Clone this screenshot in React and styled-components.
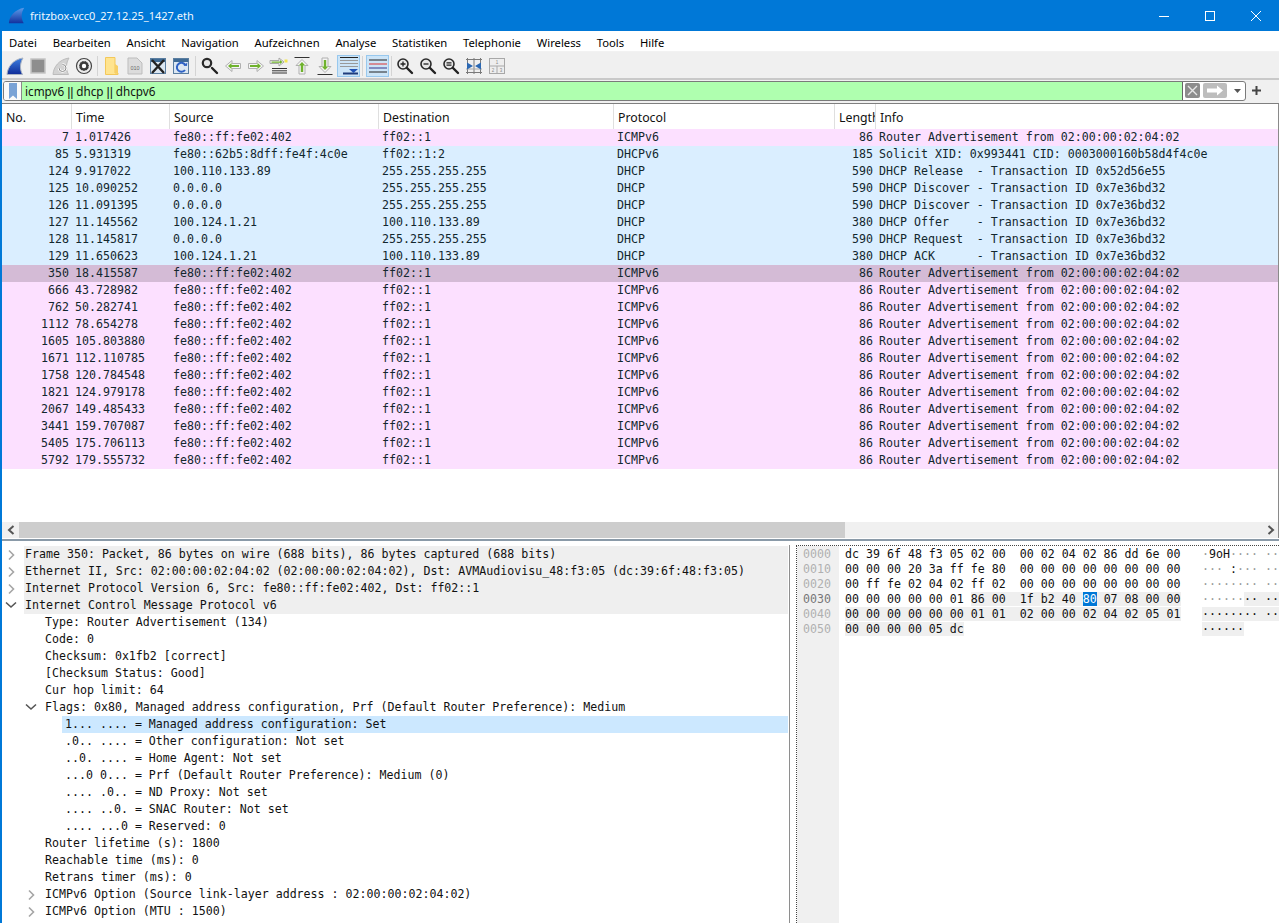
import React from "react";
import styled, { createGlobalStyle } from "styled-components";

const Global = createGlobalStyle`
  html, body { margin: 0; padding: 0; background: #fff; overflow: hidden; }
  #root { width: 1279px; height: 923px; }
`;

const UI = `"Noto Sans", "Open Sans", sans-serif`;
const MONO = `"DejaVu Sans Mono", "Liberation Mono", monospace`;

const Win = styled.div`
  width: 1279px; height: 923px; display: flex; flex-direction: column;
  overflow: hidden; background: #fff;
`;
const TitleBar = styled.div`
  height: 31px; flex: none; background: #0078d7; color: #fff; display: flex; align-items: center;
  padding-left: 8px; font: 11px ${UI};
`;
const TitleText = styled.span` margin-left: 5px; flex: 1; color: #eef6fd; `;
const WinBtns = styled.div` display: flex; `;
const WinBtn = styled.div`
  width: 46px; height: 31px; display: flex; align-items: center; justify-content: center;
`;
const Main = styled.div`
  flex: 1; display: flex; flex-direction: column; border-left: 2px solid #0078d7; min-height: 0;
`;
const MenuBar = styled.div`
  height: 21px; flex: none; display: flex; align-items: center; padding: 3px 0 0 7px; box-sizing: border-box;
  gap: 15.8px; font: 11.25px ${UI}; color: #000; border-bottom: 1px solid #f2f2f2;
`;
const ToolBar = styled.div`
  height: 25px; padding-top: 1px; flex: none; background: #f0f0f0; display: flex; align-items: center; padding-left: 1px;
  border-bottom: 2px solid #c9c9c9; box-sizing: content-box;
`;
const ToolBtn = styled.div`
  width: 23px; height: 22px; flex: none; box-sizing: border-box; display: flex; align-items: center; justify-content: center;
  ${p => p.$on && `background: #cce4f7; border: 1px solid #98c8ee; margin-left: 1px;`}
`;
const ToolSep = styled.div`
  width: ${p => p.$w || 6}px; flex: none; display: flex; justify-content: center; height: 20px;
  &::before { content: ""; width: 1px; background: #d4d4d4; }
`;
const FilterRow = styled.div`
  height: 23px; flex: none; background: #f0f0f0; display: flex; align-items: center; padding: 0 0 2px 1px; box-sizing: border-box;
`;
const FilterBox = styled.div`
  width: 1243px; height: 20px; box-sizing: border-box; border: 1px solid #7a7a7a; border-radius: 3px; background: #fff;
  display: flex; align-items: stretch; overflow: hidden;
`;
const Bookmark = styled.div`
  width: 17px; flex: none; display: flex; align-items: center; justify-content: center; border-right: 1px solid #8a8a8a; background: #fafafa;
`;
const FilterInput = styled.div`
  flex: 1; background: #afffaf; font: 11.7px/18px ${UI}; color: #111; padding-left: 3px; border-right: 1px solid #666; white-space: pre;
`;
const Pipes = styled.span` font-family: "Liberation Sans", sans-serif; font-size: 12.5px; letter-spacing: -0.2px; `;
const FilterEnd = styled.div`
  width: 62px; flex: none; display: flex; align-items: center; padding-left: 2px; gap: 3px; box-sizing: border-box;
`;
const PlusBtn = styled.div`
  width: 22px; text-align: center; display: flex; justify-content: center; margin-left: -1px;
`;
const TableFrame = styled.div`
  height: 435px; flex: none; display: flex; flex-direction: column; border-top: 1px solid #7f7f7f; border-right: 1px solid #8a8a8a; box-sizing: border-box;
  overflow: hidden;
`;
const cols = `70px 98px 209px 235px 221px 41px 1fr`;
const HeadRow = styled.div`
  display: grid; grid-template-columns: ${cols}; height: 25px; flex: none; background: #fff;
`;
const HeadCell = styled.div`
  border-right: 1px solid #dfdfdf; font: 12.3px/28px ${UI}; color: #111; padding-left: 4px; overflow: hidden; white-space: nowrap;
  box-sizing: border-box;
  &:last-child { border-right: 0; }
`;
const Rows = styled.div` flex: 1; min-height: 0; `;
const Row = styled.div`
  display: grid; grid-template-columns: ${cols}; height: 17px; font: 11.62px/17px ${MONO}; color: #12272e; white-space: pre;
  background: ${p => p.$kind === "sel" ? "#d4bbd6" : p.$kind === "dhcp" ? "#daeeff" : "#fce0ff"};
`;
const Cell = styled.div`
  padding: ${p => p.$right ? "0 3px 0 0" : "0 0 0 3px"}; text-align: ${p => p.$right ? "right" : "left"}; overflow: hidden;
  box-sizing: border-box;
`;
const HScroll = styled.div`
  height: 16px; flex: none; background: #f0f0f0; display: flex; align-items: center; margin-right: -1px;
`;
const HArrow = styled.div` width: 17px; flex: none; display: flex; justify-content: center; align-items: center; `;
const HThumb = styled.div` width: 826px; height: 100%; background: #cdcdcd; `;
const HSpace = styled.div` flex: 1; `;
const Split = styled.div`
  flex: 1; min-height: 0; display: flex; border-top: 2px solid #8a9aa8; margin-top: 1px;
`;
const TreePane = styled.div`
  width: 786px; flex: none; margin-top: 4px; padding: 1px 1px 0 0; border-right: 1px solid #8e8e8e; overflow: hidden; box-sizing: content-box;
`;
const TreeRow = styled.div`
  height: 17px; display: flex; align-items: center; padding-left: ${p => p.$lvl * 20}px; font: 11.62px/17px ${MONO}; color: #111; white-space: pre;
`;
const Twist = styled.div` width: 22px; flex: none; display: flex; justify-content: center; padding-right: 5px; box-sizing: border-box; `;
const TreeText = styled.div`
  flex: 1; height: 17px; padding-left: 1px;
  ${p => p.$sel && `margin-left: -2px; padding-left: 3px;`}
  background: ${p => p.$sel ? "#cce8ff" : p.$top ? "#efefef" : "transparent"};
`;
const HexPane = styled.div`
  flex: 1; margin: 4px 0 0 6px; border: 1px dotted #444; border-right: 0; border-bottom: 0; display: flex; overflow: hidden; font: 11.62px/15px ${MONO}; white-space: pre;
`;
const Offsets = styled.div`
  width: 42px; flex: none; background: #f0f0f0; padding: 1px 0 0 6px; box-sizing: border-box;
`;
const OffsetLine = styled.div` color: ${p => p.$on ? "#777" : "#b0b0b0"}; `;
const HexCol = styled.div` width: 363px; flex: none; padding: 1px 0 0 6px; box-sizing: border-box; color: #111; `;
const AsciiCol = styled.div` flex: 1; padding-top: 1px; color: #111; overflow: hidden; `;
const Line = styled.div` height: 15px; `;
const Hl = styled.span` background: #efefef; `;
const Cur = styled.span` background: #0078d7; color: #fff; `;
const Dim = styled.span` color: #9a9a9a; `;

const base = { width: 20, height: 20, viewBox: "0 0 20 20", fill: "none" };

const FIN = "M2 18.5C2.5 11 8 3.5 18 2 15 7 14.5 13 17.5 18.5Z";
const IcFin = () => (
  <svg {...base}><defs><linearGradient id="fg" x1="0" y1="0" x2="0" y2="1"><stop offset="0" stopColor="#3d7fe0" /><stop offset="1" stopColor="#0f2c98" /></linearGradient></defs><path d={FIN} fill="url(#fg)" stroke="#a9b3c2" /></svg>
);
const IcStop = () => (
  <svg {...base}><rect x="3" y="3" width="14" height="14" fill="#8e8e8e" stroke="#c4c4c4" strokeWidth="1.5" /></svg>
);
const IcRestart = () => (
  <svg {...base}><path d={FIN} fill="#d2d2d2" stroke="#bcbcbc" /><path d="M8 12a3.5 3.5 0 1 0 3.5-3.5" stroke="#fff" strokeWidth="2.4" /><path d="M8 12a3.5 3.5 0 1 0 3.5-3.5" stroke="#8a8a8a" strokeWidth="1" /></svg>
);
const IcGear = () => (
  <svg {...base}><circle cx="10" cy="10" r="7.5" fill="#eee" stroke="#444" strokeWidth="1.2" /><circle cx="10" cy="10" r="5" fill="#3a3a3a" /><circle cx="10" cy="10" r="5" stroke="#ddd" strokeWidth="1" strokeDasharray="1.4 1.4" /><circle cx="10" cy="10" r="2.2" fill="#fff" /></svg>
);
const IcFolder = () => (
  <svg {...base}><path d="M3.5 1.5h9.5v15.5h3v1.5H3.5Z" fill="#ffe48f" stroke="#f3c85a" /><path d="M13 8l3 2v7h-3Z" fill="#f7cf66" /></svg>
);
const IcFile = () => (
  <svg {...base}><path d="M3 2h9l5 5v11H3Z" fill="#dcdcdc" stroke="#bdbdbd" /><text x="10" y="13.5" fontSize="5.5" fontFamily="Liberation Sans" fill="#6a6a6a" textAnchor="middle">010</text></svg>
);
const IcClose = () => (
  <svg {...base}><rect x="2.5" y="2.5" width="15" height="15" fill="#dbe7f2" stroke="#5b7ea0" /><path d="M3 3h14v3H3Z" fill="#3e6a94" /><path d="M4 4l12 13M16 4L4 17" stroke="#222" strokeWidth="2.4" /></svg>
);
const IcReload = () => (
  <svg {...base}><rect x="2.5" y="2.5" width="15" height="15" fill="#dbe7f2" stroke="#5b7ea0" /><path d="M3 3h14v3H3Z" fill="#3e6a94" /><path d="M14.5 9.5A4.5 4.5 0 1 0 14 14" stroke="#2f62c4" strokeWidth="2" /><path d="M12.5 9.5l3.5.5.3-3.5Z" fill="#2f62c4" /></svg>
);
const Mag = ({ children, x = 8, r = 5, w = 1.6 }) => (
  <svg {...base}><circle cx={x} cy={x} r={r} fill="#e8e8e8" stroke="#2a2a2a" strokeWidth={w} /><path d="M12 12l5 5" stroke="#222" strokeWidth="2.4" strokeLinecap="round" />{children}</svg>
);
const IcLeft = () => (
  <svg {...base}><path d="M2.5 10l6.5-5.5v3h8.5v5H9v3Z" fill="#f4f4f4" stroke="#b0b0b0" strokeLinejoin="round" /><path d="M5 10l3.5-3v2h7.5v2H8.5v2Z" fill="#6fb22d" /></svg>
);
const IcRight = () => (
  <svg {...base}><path d="M17.5 10L11 4.5v3H2.5v5H11v3Z" fill="#f4f4f4" stroke="#b0b0b0" strokeLinejoin="round" /><path d="M15 10l-3.5-3v2H4v2h7.5v2Z" fill="#6fb22d" /></svg>
);
const IcGoto = () => (
  <svg {...base}><path d="M3 12.5h15M3 14.8h15M3 17h15" stroke="#333" strokeWidth="1" /><path d="M1 4.500h9V2l5 4-5 4V7.500H1Z" fill="#f4f4f4" stroke="#a8a8a8" strokeLinejoin="round" /><path d="M2.500 5.500h8.500V4l2.500 2-2.500 2V6.800H2.500Z" fill="#6fb22d" /><rect x="15.500" y="3.500" width="3" height="3" fill="#f2e64e" /></svg>
);
const IcTop = () => (
  <svg {...base}><path d="M2.500 1.500h15" stroke="#333" strokeWidth="1" /><path d="M10 3.500l6 6h-3v8.500H7V9.500H4Z" fill="#f4f4f4" stroke="#b0b0b0" strokeLinejoin="round" /><path d="M10 6l3.300 3.500H11.200V16H8.800V9.500H6.700Z" fill="#6fb22d" /></svg>
);
const IcBottom = () => (
  <svg {...base}><path d="M2.500 18.500h15" stroke="#333" strokeWidth="1" /><path d="M10 16.500l-6-6h3V2h6v8.500h3Z" fill="#f4f4f4" stroke="#b0b0b0" strokeLinejoin="round" /><path d="M10 14l-3.300-3.500h2.100V4h2.400v6.500h2.100Z" fill="#6fb22d" /></svg>
);
const IcAuto = () => (
  <svg {...base}><path d="M1 1.500h18" stroke="#222" strokeWidth="1" /><path d="M1 4.500h18M1 7.500h18M1 10.500h18" stroke="#999" strokeWidth="1" /><path d="M4 17.500h15" stroke="#1f3c7a" strokeWidth="2" /><path d="M10 13h9l-4.500 4Z" fill="#2152b5" /></svg>
);
const IcColor = () => (
  <svg {...base}><path d="M1 4h18" stroke="#222" strokeWidth="1" /><path d="M1 8h18" stroke="#d33" strokeWidth="1" /><path d="M1 12h18" stroke="#36368a" strokeWidth="1" /><path d="M1 16h18" stroke="#222" strokeWidth="1" /></svg>
);
const IcResize = () => (
  <svg {...base}><path d="M3.500 2v16M10 2v16M16.500 2v16M2 3.500h16M2 16.500h16" stroke="#7a7a7a" strokeWidth="1" /><path d="M2 13h16" stroke="#a8a8a8" strokeWidth="1" /><path d="M3 6.500l6 3.500-6 3.500ZM17 6.500l-6 3.500 6 3.500Z" fill="#2b68b3" /></svg>
);
const IcLayout = () => (
  <svg {...base}><rect x="2.500" y="2.500" width="15" height="15" fill="#eee" stroke="#a8a8a8" /><path d="M3 10h14M10 10v7" stroke="#a8a8a8" /><text x="10" y="8" fontSize="4.5" fontFamily="Liberation Sans" fill="#888" textAnchor="middle">1</text><text x="6" y="15.500" fontSize="4.5" fontFamily="Liberation Sans" fill="#888" textAnchor="middle">2</text><text x="14" y="15.500" fontSize="4.5" fontFamily="Liberation Sans" fill="#888" textAnchor="middle">3</text></svg>
);

const Chevron = ({ open }) => open ? (
  <svg width="12" height="10" viewBox="0 0 12 10" fill="none"><path d="M1 1.500L6 6l5-4.500" stroke="#555" strokeWidth="1.6" /></svg>
) : (
  <svg width="8" height="12" viewBox="0 0 8 12" fill="none"><path d="M2 1.500L6.500 6 2 10.500" stroke="#a5a5a5" strokeWidth="1.6" /></svg>
);

const menus = ["Datei", "Bearbeiten", "Ansicht", "Navigation", "Aufzeichnen", "Analyse", "Statistiken", "Telephonie", "Wireless", "Tools", "Hilfe"];

const RA = "Router Advertisement from 02:00:00:02:04:02";
const icmp = (no, t, kind = "icmp") => [no, t, "fe80::ff:fe02:402", "ff02::1", "ICMPv6", "86", RA, kind];
const packets = [
  icmp("7", "1.017426"),
  ["85", "5.931319", "fe80::62b5:8dff:fe4f:4c0e", "ff02::1:2", "DHCPv6", "185", "Solicit XID: 0x993441 CID: 0003000160b58d4f4c0e", "dhcp"],
  ["124", "9.917022", "100.110.133.89", "255.255.255.255", "DHCP", "590", "DHCP Release  - Transaction ID 0x52d56e55", "dhcp"],
  ["125", "10.090252", "0.0.0.0", "255.255.255.255", "DHCP", "590", "DHCP Discover - Transaction ID 0x7e36bd32", "dhcp"],
  ["126", "11.091395", "0.0.0.0", "255.255.255.255", "DHCP", "590", "DHCP Discover - Transaction ID 0x7e36bd32", "dhcp"],
  ["127", "11.145562", "100.124.1.21", "100.110.133.89", "DHCP", "380", "DHCP Offer    - Transaction ID 0x7e36bd32", "dhcp"],
  ["128", "11.145817", "0.0.0.0", "255.255.255.255", "DHCP", "590", "DHCP Request  - Transaction ID 0x7e36bd32", "dhcp"],
  ["129", "11.650623", "100.124.1.21", "100.110.133.89", "DHCP", "380", "DHCP ACK      - Transaction ID 0x7e36bd32", "dhcp"],
  icmp("350", "18.415587", "sel"),
  icmp("666", "43.728982"),
  icmp("762", "50.282741"),
  icmp("1112", "78.654278"),
  icmp("1605", "105.803880"),
  icmp("1671", "112.110785"),
  icmp("1758", "120.784548"),
  icmp("1821", "124.979178"),
  icmp("2067", "149.485433"),
  icmp("3441", "159.707087"),
  icmp("5405", "175.706113"),
  icmp("5792", "179.555732"),
];

const tree = [
  [0, "c", "Frame 350: Packet, 86 bytes on wire (688 bits), 86 bytes captured (688 bits)"],
  [0, "c", "Ethernet II, Src: 02:00:00:02:04:02 (02:00:00:02:04:02), Dst: AVMAudiovisu_48:f3:05 (dc:39:6f:48:f3:05)"],
  [0, "c", "Internet Protocol Version 6, Src: fe80::ff:fe02:402, Dst: ff02::1"],
  [0, "o", "Internet Control Message Protocol v6"],
  [1, "", "Type: Router Advertisement (134)"],
  [1, "", "Code: 0"],
  [1, "", "Checksum: 0x1fb2 [correct]"],
  [1, "", "[Checksum Status: Good]"],
  [1, "", "Cur hop limit: 64"],
  [1, "o", "Flags: 0x80, Managed address configuration, Prf (Default Router Preference): Medium"],
  [2, "", "1... .... = Managed address configuration: Set", true],
  [2, "", ".0.. .... = Other configuration: Not set"],
  [2, "", "..0. .... = Home Agent: Not set"],
  [2, "", "...0 0... = Prf (Default Router Preference): Medium (0)"],
  [2, "", ".... .0.. = ND Proxy: Not set"],
  [2, "", ".... ..0. = SNAC Router: Not set"],
  [2, "", ".... ...0 = Reserved: 0"],
  [1, "", "Router lifetime (s): 1800"],
  [1, "", "Reachable time (ms): 0"],
  [1, "", "Retrans timer (ms): 0"],
  [1, "c", "ICMPv6 Option (Source link-layer address : 02:00:00:02:04:02)"],
  [1, "c", "ICMPv6 Option (MTU : 1500)"],
];

const d = n => "\u00b7".repeat(n);

export default function App() {
  return (
    <Win>
      <Global />
      <TitleBar>
        <svg width="17" height="17" viewBox="0 0 20 20" fill="none"><defs><linearGradient id="tf" x1="0" y1="0" x2="0" y2="1"><stop offset="0" stopColor="#5b9bea" /><stop offset="1" stopColor="#12329e" /></linearGradient></defs><path d="M1 19C1.500 11 8 3 19 1 15.500 7 15 13 18.500 19Z" fill="url(#tf)" /></svg>
        <TitleText>fritzbox-vcc0_27.12.25_1427.eth</TitleText>
        <WinBtns>
          <WinBtn><svg width="10" height="10" viewBox="0 0 10 10"><path d="M0 5.500h10" stroke="#fff" strokeWidth="1" /></svg></WinBtn>
          <WinBtn><svg width="10" height="10" viewBox="0 0 10 10" fill="none"><rect x=".5" y=".5" width="9" height="9" stroke="#fff" /></svg></WinBtn>
          <WinBtn><svg width="10" height="10" viewBox="0 0 10 10" fill="none"><path d="M0 0l10 10M10 0L0 10" stroke="#fff" strokeWidth="1" /></svg></WinBtn>
        </WinBtns>
      </TitleBar>
      <Main>
        <MenuBar>{menus.map(m => <span key={m}>{m}</span>)}</MenuBar>
        <ToolBar>
          <ToolBtn><IcFin /></ToolBtn>
          <ToolBtn><IcStop /></ToolBtn>
          <ToolBtn><IcRestart /></ToolBtn>
          <ToolBtn><IcGear /></ToolBtn>
          <ToolSep $w={5} />
          <ToolBtn><IcFolder /></ToolBtn>
          <ToolBtn><IcFile /></ToolBtn>
          <ToolBtn><IcClose /></ToolBtn>
          <ToolBtn><IcReload /></ToolBtn>
          <ToolSep />
          <ToolBtn><Mag x={7} r={4.2} w={2.2} /></ToolBtn>
          <ToolBtn><IcLeft /></ToolBtn>
          <ToolBtn><IcRight /></ToolBtn>
          <ToolBtn><IcGoto /></ToolBtn>
          <ToolBtn><IcTop /></ToolBtn>
          <ToolBtn><IcBottom /></ToolBtn>
          <ToolBtn $on><IcAuto /></ToolBtn>
          <ToolSep $w={5} />
          <ToolBtn $on><IcColor /></ToolBtn>
          <ToolSep $w={4} />
          <ToolBtn><Mag><path d="M5.500 8h5M8 5.500v5" stroke="#222" strokeWidth="1.3" /></Mag></ToolBtn>
          <ToolBtn><Mag><path d="M5.500 8h5" stroke="#222" strokeWidth="1.3" /></Mag></ToolBtn>
          <ToolBtn><Mag><path d="M5.500 6.800h5M5.500 9.200h5" stroke="#222" strokeWidth="1.3" /></Mag></ToolBtn>
          <ToolBtn><IcResize /></ToolBtn>
          <ToolBtn><IcLayout /></ToolBtn>
        </ToolBar>
        <FilterRow>
          <FilterBox>
            <Bookmark>
              <svg width="10" height="16" viewBox="0 0 10 16"><path d="M1 0h8v16L5 12.500 1 16Z" fill="#7aa3d6" /></svg>
            </Bookmark>
            <FilterInput>icmpv6 <Pipes>||</Pipes> dhcp <Pipes>||</Pipes> dhcpv6</FilterInput>
            <FilterEnd>
              <svg width="15" height="15" viewBox="0 0 15 15" fill="none"><rect width="15" height="15" rx="2" fill="#8c8c8c" /><path d="M3 3l9 9M12 3l-9 9" stroke="#e6e6e6" strokeWidth="1.4" /></svg>
              <svg width="24" height="15" viewBox="0 0 24 15"><rect width="24" height="15" rx="2" fill="#bdbdbd" /><path d="M4 5.500h10V2.500l6 5-6 5V9.500H4Z" fill="#fff" /></svg>
              <svg width="14" height="15" viewBox="0 0 14 15"><path d="M4 6h7l-3.500 4Z" fill="#555" /></svg>
            </FilterEnd>
          </FilterBox>
          <PlusBtn><svg width="9" height="9" viewBox="0 0 9 9"><path d="M4.500 0v9M0 4.500h9" stroke="#444" strokeWidth="2" /></svg></PlusBtn>
        </FilterRow>
        <TableFrame>
          <HeadRow>
            {["No.", "Time", "Source", "Destination", "Protocol", "Length", "Info"].map(h => <HeadCell key={h}>{h}</HeadCell>)}
          </HeadRow>
          <Rows>
            {packets.map(p => (
              <Row key={p[0]} $kind={p[7]}>
                <Cell $right>{p[0]}</Cell>
                <Cell>{p[1]}</Cell>
                <Cell>{p[2]}</Cell>
                <Cell>{p[3]}</Cell>
                <Cell>{p[4]}</Cell>
                <Cell $right>{p[5]}</Cell>
                <Cell>{p[6]}</Cell>
              </Row>
            ))}
          </Rows>
          <HScroll>
            <HArrow><svg width="8" height="10" viewBox="0 0 8 10" fill="none"><path d="M6.500 1L2 5l4.500 4" stroke="#555" strokeWidth="2" /></svg></HArrow>
            <HThumb />
            <HSpace />
            <HArrow><svg width="8" height="10" viewBox="0 0 8 10" fill="none"><path d="M1.500 1L6 5 1.500 9" stroke="#555" strokeWidth="2" /></svg></HArrow>
          </HScroll>
        </TableFrame>
        <Split>
          <TreePane>
            {tree.map((t, i) => (
              <TreeRow key={i} $lvl={t[0]}>
                <Twist>{t[1] && <Chevron open={t[1] === "o"} />}</Twist>
                <TreeText $top={t[0] === 0} $sel={t[3]}>{t[2]}</TreeText>
              </TreeRow>
            ))}
          </TreePane>
          <HexPane>
            <Offsets>
              {["0000", "0010", "0020", "0030", "0040", "0050"].map((o, i) => <OffsetLine key={o} $on={i === 3}>{o}</OffsetLine>)}
            </Offsets>
            <HexCol>
              <Line>dc 39 6f 48 f3 05 02 00  00 02 04 02 86 dd 6e 00</Line>
              <Line>00 00 00 20 3a ff fe 80  00 00 00 00 00 00 00 00</Line>
              <Line>00 ff fe 02 04 02 ff 02  00 00 00 00 00 00 00 00</Line>
              <Line>00 00 00 00 00 01 <Hl>86 00  1f b2 40 </Hl><Cur>80</Cur><Hl> 07 08 00 00</Hl></Line>
              <Line><Hl>00 00 00 00 00 00 01 01  02 00 00 02 04 02 05 01</Hl></Line>
              <Line><Hl>00 00 00 00 05 dc</Hl></Line>
            </HexCol>
            <AsciiCol>
              <Line><Dim>{d(1)}</Dim>9oH<Dim>{d(4) + " " + d(2)}</Dim></Line>
              <Line><Dim>{d(3)}</Dim> :<Dim>{d(3) + " " + d(2)}</Dim></Line>
              <Line><Dim>{d(8) + " " + d(2)}</Dim></Line>
              <Line><Dim>{d(6)}</Dim><Hl>{d(2) + " " + d(2) + "   "}</Hl></Line>
              <Line><Hl>{d(8) + " " + d(2) + "   "}</Hl></Line>
              <Line><Hl>{d(6)}</Hl></Line>
            </AsciiCol>
          </HexPane>
        </Split>
      </Main>
    </Win>
  );
}
